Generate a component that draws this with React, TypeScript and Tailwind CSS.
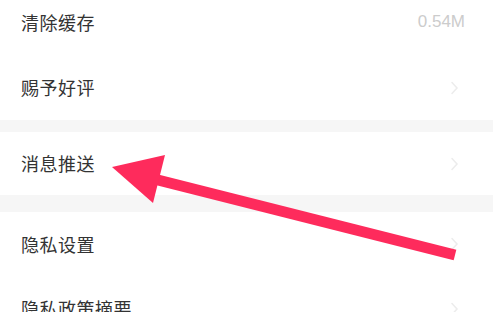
const Chevron = () => (
  <svg width="9" height="14" viewBox="0 0 9 14" className="shrink-0">
    <path d="M2 1.5 L7 7 L2 12.5" fill="none" stroke="#ececec" strokeWidth="1.5" strokeLinecap="round" />
  </svg>
);

const Row = ({ label, right, h = "h-[65px]" }: { label: string; right?: React.ReactNode; h?: string }) => (
  <div className={`flex items-center justify-between bg-white pl-[21px] pr-[34px] ${h}`}>
    <span className="text-[18px] text-[#333333] tracking-[0.5px]">{label}</span>
    {right ?? <Chevron />}
  </div>
);

const App = () => {
  return (
    <div
      className="relative w-[493px] h-[312px] overflow-hidden bg-white"
      style={{ fontFamily: '"Noto Sans CJK SC", "Noto Sans", sans-serif' }}
    >
      <div className="-mt-[11px] flex flex-col">
        <Row
          label="清除缓存"
          h="h-[66px]"
          right={<span className="text-[17px] text-[#cccccc] -mr-[6px]" style={{ fontFamily: '"Liberation Sans", sans-serif' }}>0.54M</span>}
        />
        <Row label="赐予好评" />
        <div className="h-[12px] bg-[#f6f6f6]" />
        <Row label="消息推送" h="h-[63px]" />
        <div className="h-[17px] bg-[#f6f6f6]" />
        <Row label="隐私设置" h="h-[64px]" />
        <Row label="隐私政策摘要" />
      </div>
      {/* arrow overlay */}
      <svg className="absolute left-0 top-0" width="493" height="312" viewBox="0 0 493 312">
        <line x1="150" y1="178" x2="455" y2="255" stroke="#fe2b5c" strokeWidth="11" />
        <polygon points="112,167 165,155 153,203" fill="#fe2b5c" />
      </svg>
    </div>
  );
};

export default App;
